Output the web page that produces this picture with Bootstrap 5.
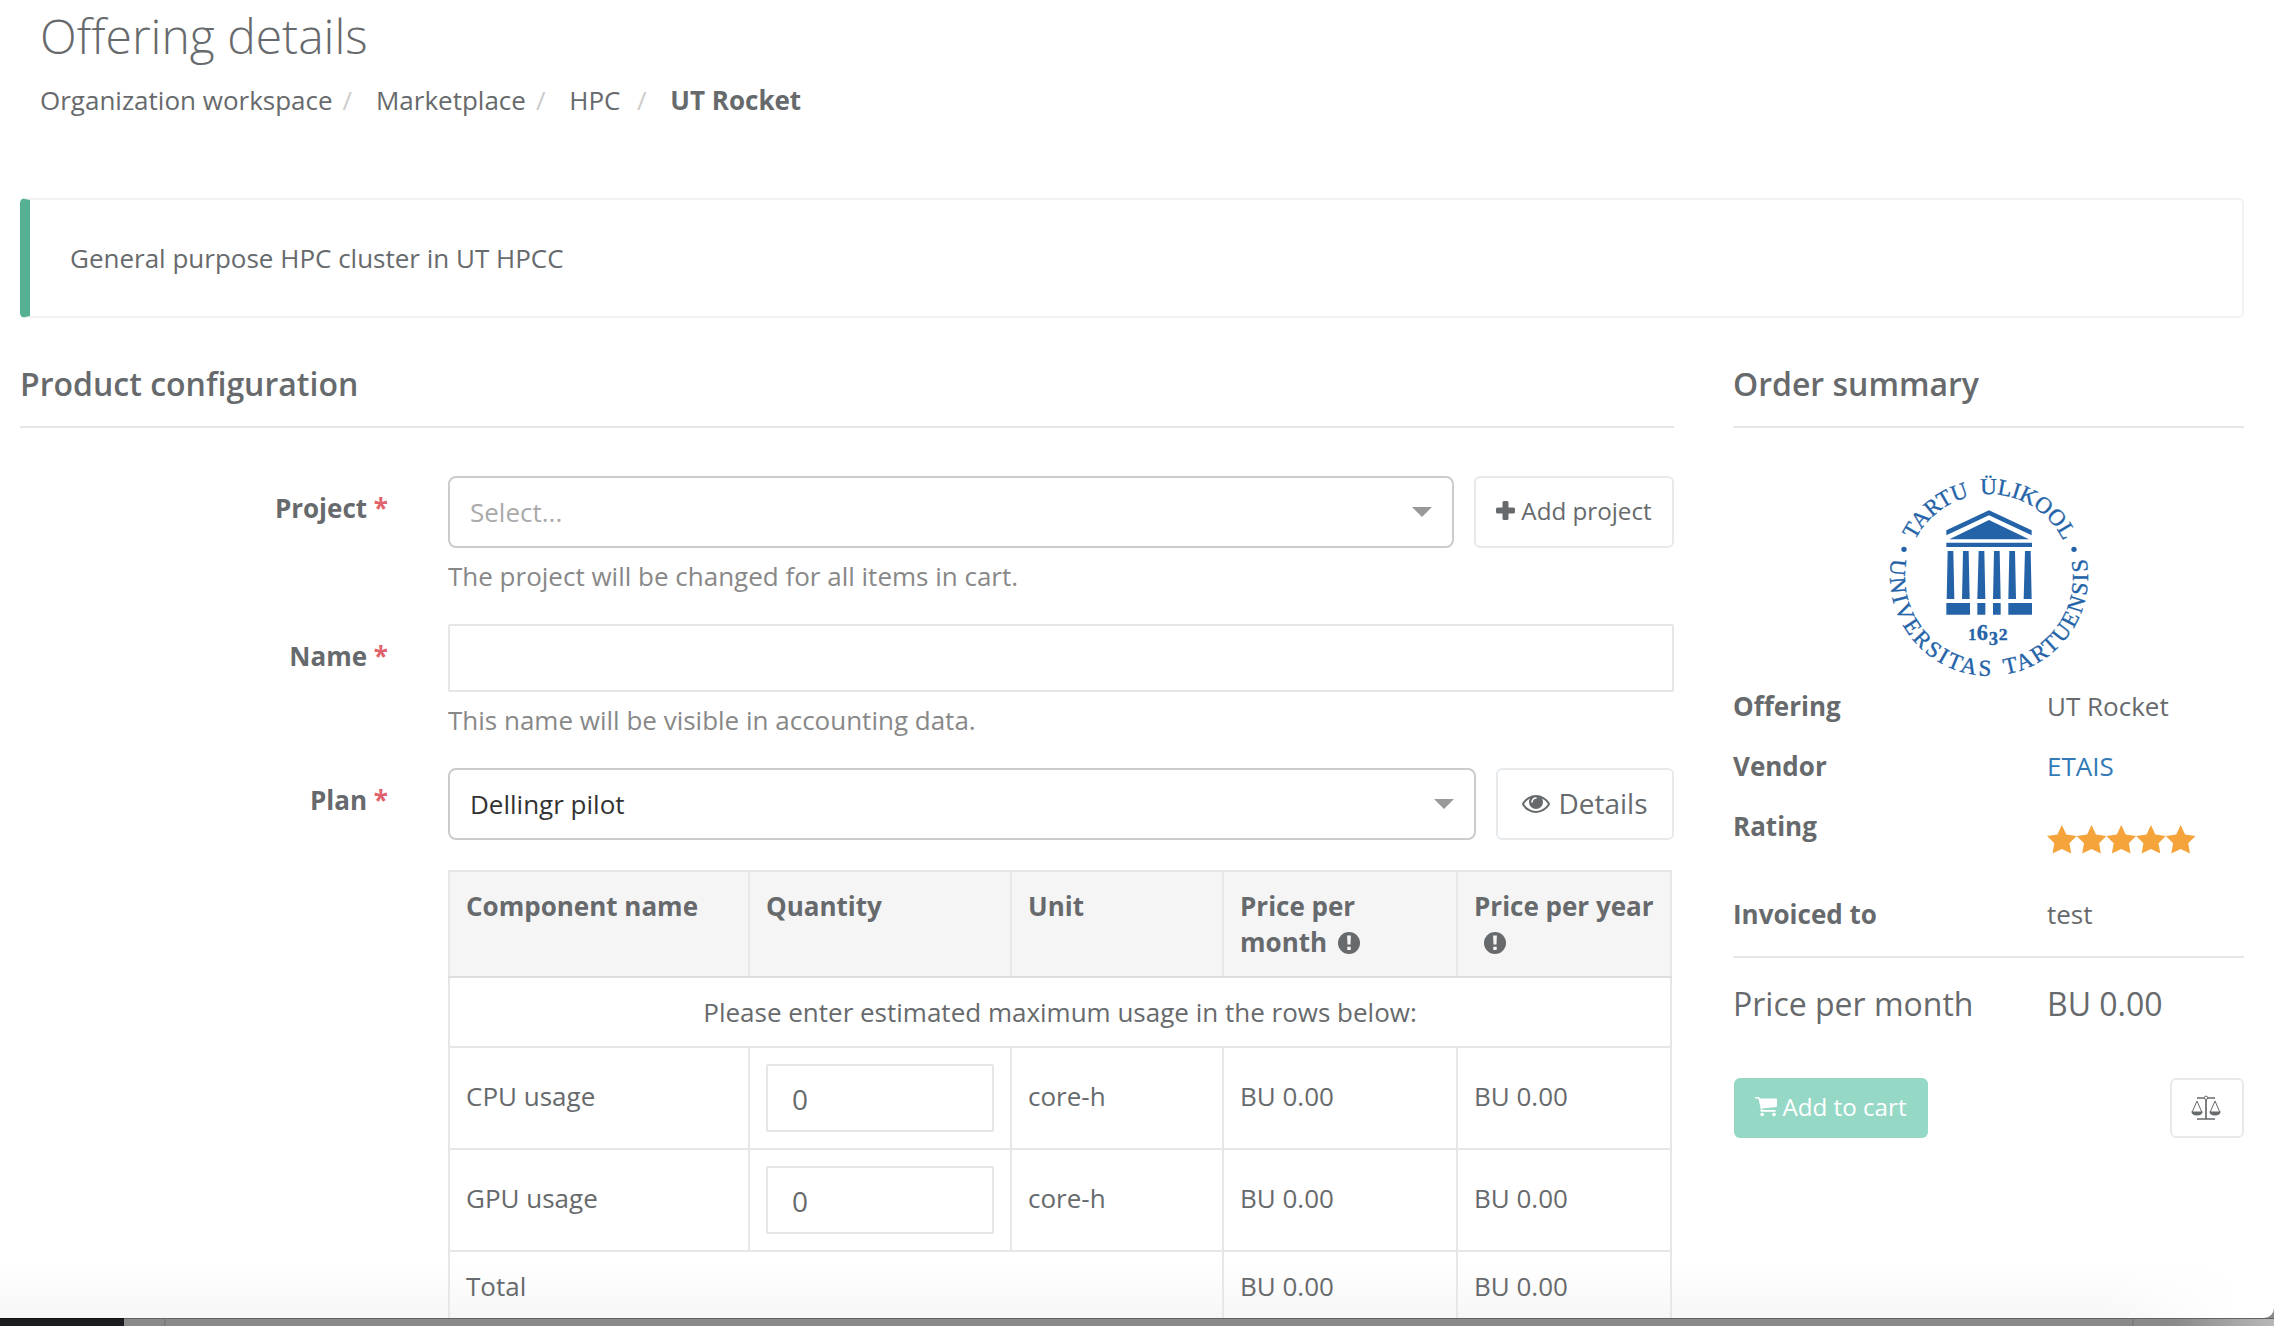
<!DOCTYPE html>
<html lang="en">
<head>
<meta charset="utf-8">
<title>Offering details</title>
<link href="https://cdn.jsdelivr.net/npm/bootstrap@5.3.0/dist/css/bootstrap.min.css" rel="stylesheet">
<style>
html, body { height: 1326px; overflow: hidden; }
body { font-family: "Open Sans", sans-serif; font-size: 26px; line-height: 37px; color: #676a6c; background: #8a8a8a; }
.app-window { height: 1318px; padding: 10px 30px 0 20px; overflow: hidden; background: linear-gradient(to right, rgba(255,255,255,0) 2100px, #fff 2240px), linear-gradient(to bottom, #fff 1262px, #f7f7f7 1318px); border-bottom-right-radius: 10px; }
.desk-strip { height: 8px; background: linear-gradient(to right, #8a8a8a 164px, #7d7d7d 164px, #7d7d7d 166px, #8a8a8a 166px, #8a8a8a 2132px, #7d7d7d 2132px, #7d7d7d 2134px, #8a8a8a 2134px, #8a8a8a 2174px, #b8b8b8); border-top: 1px solid #636363; }
.desk-dark { width: 124px; height: 8px; margin-top: -1px; background: #1b1c20; border-top: 1px solid #101114; }
.page-title { font-size: 48px; line-height: 52px; font-weight: 300; margin: 0 0 20px 20px; }
.crumbs { margin: 0 0 79px 20px; }
.crumbs .breadcrumb-item { padding: 0; }
.crumbs .breadcrumb-item + .breadcrumb-item::before { color: #ccc; padding: 0 23.800px 0 10px; content: "/"; font-weight: 400; }
.crumbs .breadcrumb-item.wide-gap::before { padding-left: 16.500px !important; }
.crumbs .breadcrumb-item.active { color: #676a6c; }
.callout { height: 120px; border: 2px solid #f2f2f2; border-left: 10px solid #55b094; border-radius: 5px; padding: 0 40px; margin-bottom: 48px; }
.form-side { width: 1654px; }
.order-side { width: 511px; }
.section-title { font-size: 32px; line-height: 36px; font-weight: 600; padding-bottom: 24px; margin: 0 0 48px; border-bottom: 2px solid #e7e7e7; }
.field-label { width: 368px; margin-right: 60px; padding-top: 14px; text-align: right; font-weight: 700; flex: none; }
.req { color: #e0636c; }
.field-row { margin-bottom: 29px; }
.with-button { gap: 20px; }
.pick { height: 72px; border: 2px solid #ccc; border-radius: 8px; padding: 0 20px; color: #333; }
.pick .hint { color: #aaa; }
.hint-text { color: #888; margin-top: 10px; }
.plain-input { height: 68px; border: 2px solid #e5e6e7; border-radius: 2px; padding: 0 24px; font-size: 28px; color: #676a6c; }
.side-btn { height: 72px; border: 2px solid #e7eaec; border-radius: 6px; color: #676a6c; padding: 0 0 3px; flex: none; line-height: 37px; }
.btn-add { width: 200px; font-size: 24.200px; gap: 6px; }
.btn-details { width: 178px; font-size: 28px; gap: 8px; padding-bottom: 1px; }
.plan-table { width: 1224px; table-layout: fixed; border-collapse: collapse; margin: 30px 0 0; color: #676a6c; border-color: #e7e7e7; }
.plan-table > :not(caption) > * > * { border: 2px solid #e7e7e7; padding: 15.500px 16px 14.500px; color: #676a6c; background: transparent; }
.plan-table > thead > tr > th { background: #f5f5f6; border-bottom-color: #ddd; font-weight: 700; line-height: 36px; vertical-align: top; padding: 16px 16px 14px; }
.plan-table > tbody > tr.use-row > td { padding-top: 30px; padding-bottom: 0; }
.plan-table > tbody > tr.use-row > td.qty { padding: 16px 16px 0; }
.plan-table .plain-input { padding-top: 2px; }
.head-row { height: 106px; }
.slim-row { height: 70px; }
.use-row { height: 102px; }
.info-mark { display: inline-block; vertical-align: -2px; }
.order-row { height: 60px; }
.order-key { width: 314px; flex: none; }
.vendor-name { color: #337ab7; }
.rating-row { height: 88px; }
.rating-row svg { margin-top: 17px; }
.invoice-row { height: 60px; }
.price-line { font-size: 32px; line-height: 46px; border-top: 2px solid #e7e7e7; padding-top: 23px; }
.order-actions { margin-top: 51px; padding-left: 1px; }
.btn-cart { width: 194px; height: 60px; background: #96d8c6; color: #fff; border: 0; border-radius: 6px; font-size: 24.200px; padding: 0 0 2px; gap: 5px; }
.btn-scale { width: 74px; height: 60px; border: 2px solid #e7eaec; border-radius: 6px; padding: 0 2px 0 0; color: #676a6c; }
svg { display: block; flex: none; }
.seal { margin: -1px auto 12px; overflow: visible; }
.seal text { font-family: "Liberation Serif", serif; fill: #2463a8; stroke: #2463a8; stroke-width: 1; }
</style>
</head>
<body>
<div class="app-window">
  <h2 class="page-title">Offering details</h2>
  <ol class="breadcrumb crumbs">
    <li class="breadcrumb-item">Organization workspace</li>
    <li class="breadcrumb-item">Marketplace</li>
    <li class="breadcrumb-item">HPC</li>
    <li class="breadcrumb-item wide-gap active fw-bold">UT Rocket</li>
  </ol>
  <div class="callout d-flex align-items-center">General purpose HPC cluster in UT HPCC</div>
  <div class="d-flex justify-content-between">
    <section class="form-side">
      <h3 class="section-title">Product configuration</h3>
      <div class="d-flex field-row">
        <div class="field-label">Project <span class="req">*</span></div>
        <div class="flex-grow-1">
          <div class="d-flex with-button">
            <div class="pick flex-grow-1 d-flex align-items-center justify-content-between"><span class="hint">Select...</span><svg width="20" height="10" viewBox="0 0 20 10"><path d="M0 0h20L10 10z" fill="#999"/></svg></div>
            <button class="btn side-btn btn-add d-flex align-items-center justify-content-center"><svg width="19" height="19" viewBox="0 0 19 19"><path d="M8 0h3q1.500 0 1.500 1.500v5h5q1.500 0 1.500 1.500v3q0 1.500-1.500 1.500h-5v5q0 1.500-1.500 1.500h-3q-1.500 0-1.500-1.500v-5h-5q-1.500 0-1.500-1.500v-3q0-1.500 1.500-1.500h5v-5q0-1.500 1.500-1.500z" fill="#676a6c"/></svg><span>Add project</span></button>
          </div>
          <div class="hint-text">The project will be changed for all items in cart.</div>
        </div>
      </div>
      <div class="d-flex field-row">
        <div class="field-label">Name <span class="req">*</span></div>
        <div class="flex-grow-1">
          <div class="plain-input"></div>
          <div class="hint-text">This name will be visible in accounting data.</div>
        </div>
      </div>
      <div class="d-flex">
        <div class="field-label">Plan <span class="req">*</span></div>
        <div class="flex-grow-1">
          <div class="d-flex with-button">
            <div class="pick flex-grow-1 d-flex align-items-center justify-content-between"><span>Dellingr pilot</span><svg width="20" height="10" viewBox="0 0 20 10"><path d="M0 0h20L10 10z" fill="#999"/></svg></div>
            <button class="btn side-btn btn-details d-flex align-items-center justify-content-center"><svg width="28" height="18" viewBox="0 384 1792 1152"><path fill="#676a6c" d="M1664 960q-152-236-381-353 61 104 61 225 0 185-131.500 316.500t-316.500 131.500-316.500-131.500-131.500-316.500q0-121 61-225-229 117-381 353 133 205 333.500 326.500t434.500 121.500 434.500-121.500 333.500-326.500zm-720-384q0-20-14-34t-34-14q-125 0-214.500 89.500t-89.500 214.500q0 20 14 34t34 14 34-14 14-34q0-86 61-147t147-61q20 0 34-14t14-34zm848 384q0 34-20 69-140 230-376.500 368.500t-499.500 138.500-499.500-139-376.500-368q-20-35-20-69t20-69q140-229 376.500-368t499.500-139 499.500 139 376.500 368q20 35 20 69z"/></svg><span>Details</span></button>
          </div>
          <table class="table plan-table">
            <colgroup><col style="width:300px"><col style="width:262px"><col style="width:212px"><col style="width:234px"><col style="width:214px"></colgroup>
            <thead><tr class="head-row"><th>Component name</th><th>Quantity</th><th>Unit</th><th>Price per month <svg class="info-mark ms-1" width="22" height="22" viewBox="0 0 22 22"><circle cx="11" cy="11" r="11" fill="#676a6c"/><path d="M9.100 3.500h3.800l-.4 9h-3z M9.300 14.700h3.400v3.300h-3.400z" fill="#f5f5f6"/></svg></th><th class="text-nowrap">Price per year<br>&nbsp;<svg class="info-mark" width="22" height="22" viewBox="0 0 22 22" style="margin-left:3px"><circle cx="11" cy="11" r="11" fill="#676a6c"/><path d="M9.100 3.500h3.800l-.4 9h-3z M9.300 14.700h3.400v3.300h-3.400z" fill="#f5f5f6"/></svg></th></tr></thead>
            <tbody>
              <tr class="slim-row"><td colspan="5" class="text-center">Please enter estimated maximum usage in the rows below:</td></tr>
              <tr class="use-row"><td>CPU usage</td><td class="qty"><div class="plain-input d-flex align-items-center">0</div></td><td>core-h</td><td>BU 0.00</td><td>BU 0.00</td></tr>
              <tr class="use-row"><td>GPU usage</td><td class="qty"><div class="plain-input d-flex align-items-center">0</div></td><td>core-h</td><td>BU 0.00</td><td>BU 0.00</td></tr>
              <tr class="slim-row"><td colspan="3">Total</td><td>BU 0.00</td><td>BU 0.00</td></tr>
            </tbody>
          </table>
        </div>
      </div>
    </section>
    <aside class="order-side">
      <h3 class="section-title">Order summary</h3>
      <svg class="seal" width="200" height="201" viewBox="87 75 600 603">
        <defs>
          <path id="arcTop" d="M165 271 A248 248 0 0 1 612 276"/>
          <path id="arcBottom" d="M95 326 A297 297 0 1 0 679 326"/>
        </defs>
        <g fill="#2463a8">
          <path d="M259 241L387 181L515 241V256L387 196L259 256Z"/>
          <path d="M268 268L387 210L507 268Z"/>
          <path d="M259 278h257v13h-257z"/>
          <path d="M263 303h17l3 144h-23zM309 303h17l3 144h-23zM356 303h17l3 144h-24zM402 303h17l3 144h-23zM448 303h17l3 144h-23zM495 303h17l3 144h-24z"/>
          <path d="M259 459h71v35h-71zM352 459h24v35h-24zM399 459h23v35h-23zM445 459h71v35h-71z"/>
          <circle cx="132" cy="298" r="8"/><circle cx="642" cy="298" r="8"/>
        </g>
        <text font-size="69"><textPath href="#arcTop" textLength="216" lengthAdjust="spacingAndGlyphs">TARTU</textPath></text>
        <text font-size="69"><textPath href="#arcTop" startOffset="249" textLength="304" lengthAdjust="spacing">ÜLIKOOL</textPath></text>
        <text font-size="69"><textPath href="#arcBottom" textLength="527" lengthAdjust="spacing">UNIVERSITAS</textPath></text>
        <text font-size="69"><textPath href="#arcBottom" startOffset="570" textLength="472" lengthAdjust="spacing">TARTUENSIS</textPath></text>
        <g font-weight="bold"><text x="325" y="571" font-size="48">1</text><text x="350" y="571" font-size="67">6</text><text x="386" y="585" font-size="56">3</text><text x="416" y="571" font-size="53">2</text></g>
      </svg>
      <div class="d-flex order-row"><b class="order-key">Offering</b><span>UT Rocket</span></div>
      <div class="d-flex order-row"><b class="order-key">Vendor</b><span class="vendor-name">ETAIS</span></div>
      <div class="d-flex rating-row"><b class="order-key">Rating</b>
        <svg width="149" height="29" viewBox="0 0 149 29"><defs><path id="st" fill="#f5a33b" d="M14.850 0L19.300 9.600L29.700 11L22.400 18.200L24.200 28.600L14.850 24L5.500 28.600L7.300 18.200L0 11L10.400 9.600Z"/></defs><use href="#st"/><use href="#st" x="29.700"/><use href="#st" x="59.400"/><use href="#st" x="89.100"/><use href="#st" x="118.800"/></svg></div>
      <div class="d-flex invoice-row"><b class="order-key">Invoiced to</b><span>test</span></div>
      <div class="d-flex price-line"><span class="order-key">Price per month</span><span>BU 0.00</span></div>
      <div class="d-flex justify-content-between order-actions">
        <button class="btn btn-cart d-flex align-items-center justify-content-center"><svg width="22" height="20" viewBox="0 0 22 20"><path fill="#fff" d="M0 .7Q0 0 .8 0H3.600Q4.800 0 5 1.600H21.200Q22 1.600 22 2.400V9Q22 9.800 21.200 9.900L7 11.600L7.300 13H20Q20.800 13 20.800 13.900T20 14.700H6.200Q5.400 14.700 5.400 13.900L5.900 12.500L3.400 1.600H.8Q0 1.600 0 .7Z"/><circle cx="7.200" cy="17.500" r="1.800" fill="#fff"/><circle cx="19" cy="17.500" r="1.800" fill="#fff"/></svg><span>Add to cart</span></button>
        <button class="btn btn-scale d-flex align-items-center justify-content-center"><svg width="30" height="26" viewBox="0 0 30 26" fill="none" stroke="#676a6c" stroke-width="1"><path stroke-width="1.700" d="M6 3h18M15 3v21M6 24h18"/><path d="M6 6L1.200 17M6 6L10.800 17M24 6L19.200 17M24 6L28.800 17"/><circle cx="15" cy="2.800" r="1.700" fill="#fff"/><path fill="#676a6c" stroke="none" d="M.3 16.500h11.400q-.5 4-5.700 4t-5.700-4zM18.300 16.500h11.400q-.5 4-5.700 4t-5.700-4z"/></svg></button>
      </div>
    </aside>
  </div>
</div>
<div class="desk-strip"><div class="desk-dark"></div></div>
<script src="https://cdn.jsdelivr.net/npm/bootstrap@5.3.0/dist/js/bootstrap.bundle.min.js"></script>
</body>
</html>
